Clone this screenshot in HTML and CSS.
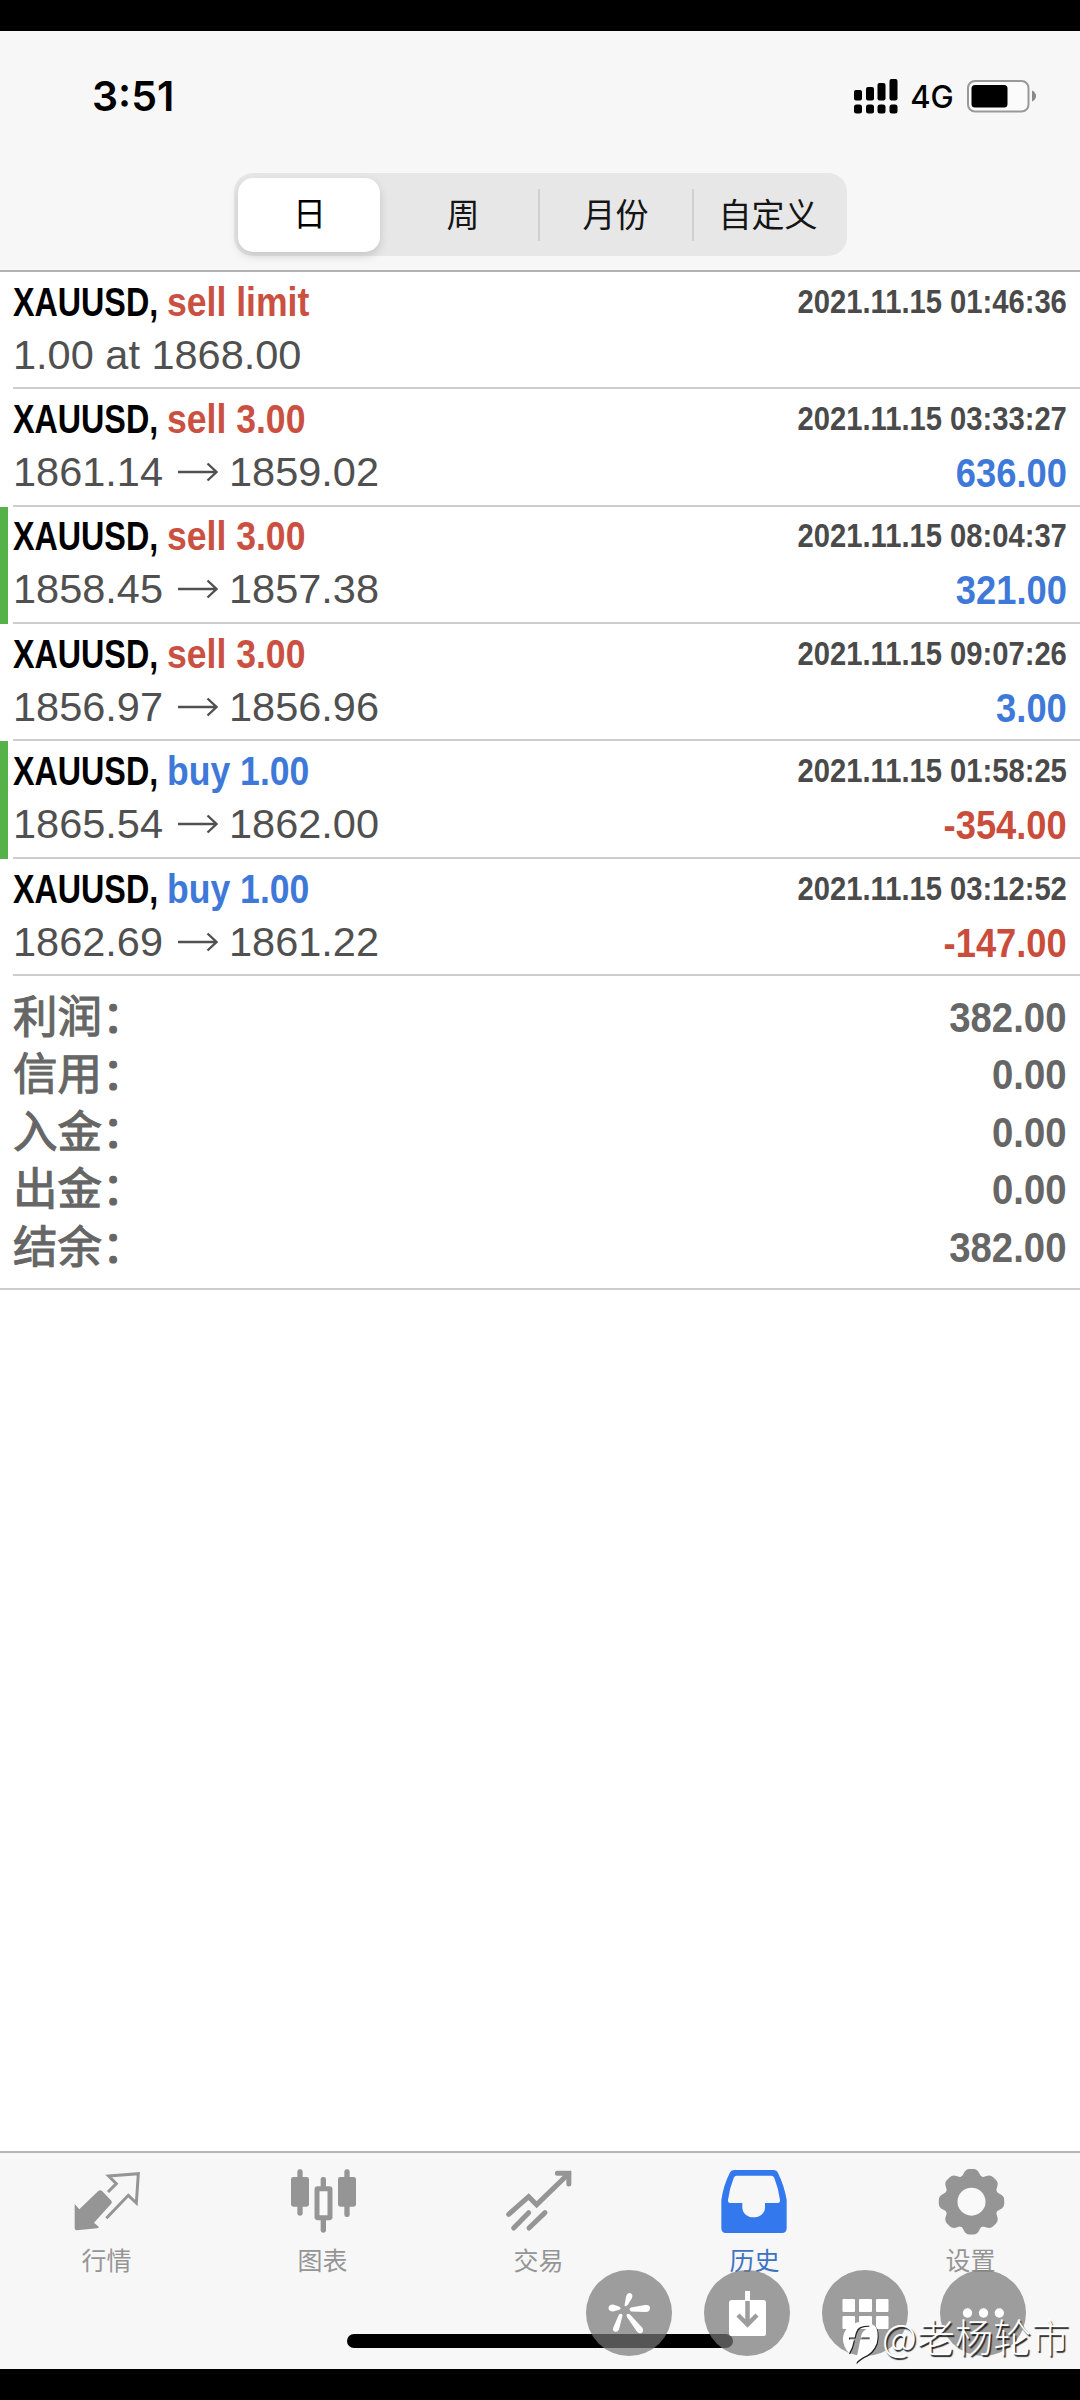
FILE: index.html
```html
<!DOCTYPE html>
<html lang="zh-CN">
<head>
<meta charset="utf-8">
<title>历史</title>
<link rel="stylesheet" href="styles.css">
</head>
<body>
<div class="screen">
  <header class="header">
    <div class="status">
      <span class="clock">3:51</span>
      <div class="status-right">
        <svg class="signal" viewBox="0 0 44 35">
          <rect x="0" y="11" width="8" height="10.500" rx="2"/><rect x="12" y="8" width="8" height="13.500" rx="2"/><rect x="23.500" y="4" width="8" height="17.500" rx="2"/><rect x="35.500" y="0" width="8" height="21.500" rx="2"/>
          <rect x="0" y="25.500" width="8" height="9" rx="2.500"/><rect x="12" y="25.500" width="8" height="9" rx="2.500"/><rect x="23.500" y="25.500" width="8" height="9" rx="2.500"/><rect x="35.500" y="25.500" width="8" height="9" rx="2.500"/>
        </svg>
        <span class="network">4G</span>
        <svg class="battery" viewBox="0 0 70 33">
          <rect x="1" y="1" width="60.500" height="30.500" rx="7" fill="#fbfbfb" stroke="#999" stroke-width="2"/>
          <rect x="4.500" y="5" width="36" height="22.500" rx="3.500"/>
          <path d="M65 10.500q4 2 4 5.500t-4 5.500z" fill="#8a8a8a"/>
        </svg>
      </div>
    </div>
    <nav class="segments">
      <span class="segment selected">日</span><span class="segment week">周</span><span class="segment divided">月份</span><span class="segment divided">自定义</span>
    </nav>
  </header>

  <main class="content">
    <section class="deals">
      <article class="deal">
        <div class="line"><b class="symbol">XAUUSD,</b><b class="side sell">sell limit</b><b class="date">2021.11.15 01:46:36</b></div>
        <div class="line"><span class="price">1.00 at 1868.00</span></div>
      </article>
      <article class="deal">
        <div class="line"><b class="symbol">XAUUSD,</b><b class="side sell">sell 3.00</b><b class="date">2021.11.15 03:33:27</b></div>
        <div class="line"><span class="price">1861.14</span><svg class="arrow" viewBox="0 0 40 20"><path d="M0 10H38.500M29.500 1.500L38.500 10L29.500 18.500"/></svg><span class="price">1859.02</span><b class="result gain">636.00</b></div>
      </article>
      <article class="deal marked">
        <div class="line"><b class="symbol">XAUUSD,</b><b class="side sell">sell 3.00</b><b class="date">2021.11.15 08:04:37</b></div>
        <div class="line"><span class="price">1858.45</span><svg class="arrow" viewBox="0 0 40 20"><path d="M0 10H38.500M29.500 1.500L38.500 10L29.500 18.500"/></svg><span class="price">1857.38</span><b class="result gain">321.00</b></div>
      </article>
      <article class="deal">
        <div class="line"><b class="symbol">XAUUSD,</b><b class="side sell">sell 3.00</b><b class="date">2021.11.15 09:07:26</b></div>
        <div class="line"><span class="price">1856.97</span><svg class="arrow" viewBox="0 0 40 20"><path d="M0 10H38.500M29.500 1.500L38.500 10L29.500 18.500"/></svg><span class="price">1856.96</span><b class="result gain">3.00</b></div>
      </article>
      <article class="deal marked">
        <div class="line"><b class="symbol">XAUUSD,</b><b class="side buy">buy 1.00</b><b class="date">2021.11.15 01:58:25</b></div>
        <div class="line"><span class="price">1865.54</span><svg class="arrow" viewBox="0 0 40 20"><path d="M0 10H38.500M29.500 1.500L38.500 10L29.500 18.500"/></svg><span class="price">1862.00</span><b class="result loss">-354.00</b></div>
      </article>
      <article class="deal">
        <div class="line"><b class="symbol">XAUUSD,</b><b class="side buy">buy 1.00</b><b class="date">2021.11.15 03:12:52</b></div>
        <div class="line"><span class="price">1862.69</span><svg class="arrow" viewBox="0 0 40 20"><path d="M0 10H38.500M29.500 1.500L38.500 10L29.500 18.500"/></svg><span class="price">1861.22</span><b class="result loss">-147.00</b></div>
      </article>
    </section>

    <section class="summary">
      <div class="total"><span class="label">利润：</span><b class="amount">382.00</b></div>
      <div class="total"><span class="label">信用：</span><b class="amount">0.00</b></div>
      <div class="total"><span class="label">入金：</span><b class="amount">0.00</b></div>
      <div class="total"><span class="label">出金：</span><b class="amount">0.00</b></div>
      <div class="total"><span class="label">结余：</span><b class="amount">382.00</b></div>
    </section>
  </main>

  <footer class="tabbar">
    <a class="tab">
      <svg class="icon" viewBox="36 18 216 216">
        <path d="M44 132L58 148L114 94Q121 87 127 94L154 122Q158 127 153 132L102 188L116 200Q117 204 112 205L50 211Q44 211 44 205Z" fill="#959595"/>
        <path d="M144 96L169 71L146 48L235 41L229 129L205 106L139 175" fill="none" stroke="#959595" stroke-width="9"/>
      </svg>
      <span>行情</span>
    </a>
    <a class="tab">
      <svg class="icon" viewBox="684 18 216 216">
        <g fill="#959595"><rect x="693" y="51" width="54" height="89" rx="7"/><rect x="834" y="51" width="54" height="89" rx="7"/><rect x="712" y="28" width="16" height="139" rx="7"/><rect x="853" y="28" width="16" height="143" rx="7"/><rect x="782" y="51" width="16" height="34" rx="7"/><rect x="782" y="172" width="16" height="46" rx="7"/></g>
        <rect x="771" y="86" width="39" height="87" rx="2" fill="#f9f9f9" stroke="#959595" stroke-width="15" stroke-linejoin="round"/>
      </svg>
      <span>图表</span>
    </a>
    <a class="tab">
      <svg class="icon" viewBox="42 48 216 216">
        <g fill="none" stroke="#959595" stroke-width="15" stroke-linecap="round" stroke-linejoin="round"><path stroke-linejoin="miter" d="M56 193L116 140L140 164L236 71"/><path stroke-linejoin="miter" d="M202 70H236.500V102"/><path d="M71 234L116 188M117 234L165 188"/></g>
      </svg>
      <span>交易</span>
    </a>
    <a class="tab active">
      <svg class="icon" viewBox="690 48 216 216">
        <path fill-rule="evenodd" fill="#3478ee" d="M734 60H850Q860 60 864 69Q883 107 890 150V235Q890 249 876 249H708Q694 249 694 235V150Q700 107 719 69Q723 60 734 60ZM740 77Q734 77 731 84Q719 114 714 150Q713 159 721 159H757V173C758 190 772 202 791 202S824 190 825 173V159H863Q871 159 870 150Q865 114 853 84Q850 77 844 77Z"/>
      </svg>
      <span>历史</span>
    </a>
    <a class="tab">
      <svg class="icon" viewBox="-35.500 -35.700 72 72">
        <g fill="#959595"><circle r="27"/><g id="teeth"><path id="tooth" d="M-12-24Q-9-25-8-28Q-6-32.700-2-32.700H2Q6-32.700 8-28Q9-25 12-24L10-10H-10Z"/><use href="#tooth" transform="rotate(45)"/><use href="#tooth" transform="rotate(90)"/><use href="#tooth" transform="rotate(135)"/></g><use href="#teeth" transform="rotate(180)"/></g>
        <circle r="14" fill="#f9f9f9"/>
      </svg>
      <span>设置</span>
    </a>
  </footer>

  <div class="home-indicator"></div>
  <div class="floating">
    <span class="round"><svg viewBox="0 0 86 86"><g fill="#fff"><path d="M38.500 35.500L40 27Q41 23 43.500 23Q47.500 23.500 46 28L42 34.500Q39.500 37.500 38.500 35.500Z"/><path d="M34 39.500L27 41.500Q23 41.500 22.500 38.500Q22.500 34.500 27 34.500L33 36.500Q35.500 38 34 39.500Z"/><path d="M45 37.500L59 35Q64 34.500 64 38Q64 42 59.500 42L45 41.500Q42 39 45 37.500Z"/><path d="M33 44.500Q36 42.500 36.500 45.500L33 59.500Q31.500 62.500 28.500 61.500Q26 60.500 27.500 57Z"/><path d="M41 44Q43 43 45 45.500L56.500 58Q58 61.500 55.500 63Q52.500 64 50.500 61L41 47Q40 45 41 44Z"/></g></svg></span>
    <span class="round"><svg viewBox="0 0 86 86"><path fill="#fff" d="M28 30H41V21H46V30H59.500Q62 30 62 32.500V63.500Q62 66 59.500 66H27.500Q25 66 25 63.500V32.500Q25 30 28 30Z"/><path d="M43.500 31V54M34 45L43.500 54.500L53 45" fill="none" stroke="#9d9d9d" stroke-width="4.500"/></svg></span>
    <span class="round"><svg viewBox="0 0 86 86"><g fill="#fff"><rect x="20.500" y="29" width="12.500" height="13" rx="1"/><rect x="37" y="29" width="13" height="13" rx="1"/><rect x="54" y="29" width="12.500" height="13" rx="1"/><rect x="20.500" y="46" width="12.500" height="13" rx="1"/><rect x="37" y="46" width="13" height="13" rx="1"/><rect x="54" y="46" width="12.500" height="13" rx="1"/></g></svg></span>
    <span class="round"><svg viewBox="0 0 86 86"><g fill="#fff"><circle cx="27.500" cy="43" r="4.700"/><circle cx="43.500" cy="43" r="4.700"/><circle cx="59.300" cy="43" r="4.700"/></g></svg></span>
  </div>
  <div class="watermark">
    <svg viewBox="36 180 114 134">
      <path d="M92 185Q126 183 140 205Q146 225 140 250Q128 281 99 291Q89 297 76 309Q84 275 91 238H119V232H92Q95 211 115 204L119 197Q92 195 82 208Q76 218 74 232H57V238H72Q68 262 57 280Q38 259 39 233Q44 193 92 185Z" fill="#222" transform="translate(3 3)"/><path d="M92 185Q126 183 140 205Q146 225 140 250Q128 281 99 291Q89 297 76 309Q84 275 91 238H119V232H92Q95 211 115 204L119 197Q92 195 82 208Q76 218 74 232H57V238H72Q68 262 57 280Q38 259 39 233Q44 193 92 185Z" fill="#fff"/>
    </svg>
    <span>@老杨轮市</span>
  </div>
</div>
</body>
</html>
```

FILE: styles.css
```css
* { box-sizing: border-box; }
body { margin: 0; background: #000; }

.screen {
  position: relative;
  width: 1080px;
  height: 2400px;
  padding: 31px 0;
  overflow: hidden;
  display: flex;
  flex-direction: column;
  font-family: "Liberation Sans", "Noto Sans CJK SC", sans-serif;
  background: #000;
}

/* Header */
.header {
  flex: none;
  height: 241px;
  display: flex;
  flex-direction: column;
  align-items: center;
  background: #f7f7f7;
  border-bottom: 2px solid #b2b2b2;
}
.status {
  width: 100%;
  height: 142px;
  padding: 0 43px 12px 92px;
  display: flex;
  align-items: center;
  justify-content: space-between;
}
.clock { font: 600 41px/50px Inter, sans-serif; }
.status-right { display: flex; align-items: center; }
.signal { width: 44px; height: 35px; }
.network { width: 44px; margin: 2px 13px 0 12px; font: 500 31px/36px Inter, sans-serif; text-align: center; }
.battery { width: 70px; height: 33px; }

.segments {
  width: 613px;
  height: 83px;
  padding: 4px;
  display: grid;
  grid-template-columns: 142px 158px 154px 1fr;
  align-items: center;
  border-radius: 19px;
  background: #e7e7e7;
  font: 33px/48px "Noto Sans CJK SC", sans-serif;
  color: #151515;
}
.segment { text-align: center; padding-bottom: 4px; }
.week { padding-left: 9px; }
.divided { border-left: 2px solid #d0d0d0; }
.selected {
  height: 74px;
  padding-left: 2px;
  line-height: 69px;
  background: #fff;
  border-radius: 15px;
  box-shadow: 0 4px 10px rgba(0, 0, 0, .15);
  color: #000;
}

/* Deals */
.content { flex: 1; background: #fff; }
.deal {
  height: 117.35px;
  padding: 2.8px 13px 0 13px;
  background: linear-gradient(#cdcdcd, #cdcdcd) 13px 100% / 100% 2px no-repeat;
}
.marked { border-left: 8px solid #55b248; padding-left: 5px; background-position-x: 5px; }
.line {
  height: 53px;
  display: flex;
  align-items: center;
  font-size: 41.5px;
  line-height: 53px;
  white-space: nowrap;
  color: #505050;
}
.symbol { width: 154px; color: #000; transform: scaleX(.777); transform-origin: 0 50%; }
.side { transform: scaleX(.857); transform-origin: 0 50%; }
.sell { color: #ca5142; }
.buy { color: #3e79d9; }
.date { margin-left: auto; font-size: 34px; color: #4a4a4a; transform: scaleX(.858); transform-origin: 100% 50%; }
.arrow { width: 40px; height: 20px; margin: 1px 11px 0 15px; fill: none; stroke: #505050; stroke-width: 2.4; }
.result { margin-left: auto; padding-top: 2px; transform: scaleX(.875); transform-origin: 100% 50%; }
.gain { color: #3e79d9; }
.loss { color: #ca4d3c; }

/* Summary */
.summary { height: 314.400px; padding: 12.700px 13px 0 13px; border-bottom: 2px solid #cdcdcd; }
.total { height: 57.400px; display: flex; justify-content: space-between; align-items: center; color: #666; }
.label { font-size: 44.500px; line-height: 57px; -webkit-text-stroke: 1.100px #666; }
.amount { font-size: 43px; line-height: 57px; transform: scaleX(.892); transform-origin: 100% 50%; }

/* Tab bar */
.tabbar {
  flex: none;
  height: 218px;
  padding-top: 13px;
  display: grid;
  grid-template-columns: repeat(5, 1fr);
  border-top: 2px solid #b5b5b5;
  background: #f7f7f7;
}
.tab { display: flex; flex-direction: column; align-items: center; font: 25px/36px "Noto Sans CJK SC", sans-serif; color: #959595; }
.tab span { margin: 3px 3px 0 0; }
.active { color: #3e73c4; }
.icon { width: 72px; height: 72px; }

/* Overlays */
.home-indicator { position: absolute; left: 347px; top: 2334px; width: 386px; height: 14px; border-radius: 7px; background: #000; }
.floating { position: absolute; left: 586px; top: 2270px; display: flex; gap: 32px; }
.round { width: 86px; height: 86px; border-radius: 50%; background: rgba(120, 120, 120, .71); }
.round svg { display: block; width: 86px; height: 86px; }
.watermark {
  position: absolute;
  left: 842px;
  top: 2307px;
  display: flex;
  align-items: center;
  color: #fff;
  font: 300 38.200px/54px "Noto Sans CJK SC", sans-serif;
  text-shadow: 1.500px 1.500px 1px #222;
}
.watermark svg { width: 38px; height: 45px; margin: 13px 2px 0 0; }
```
